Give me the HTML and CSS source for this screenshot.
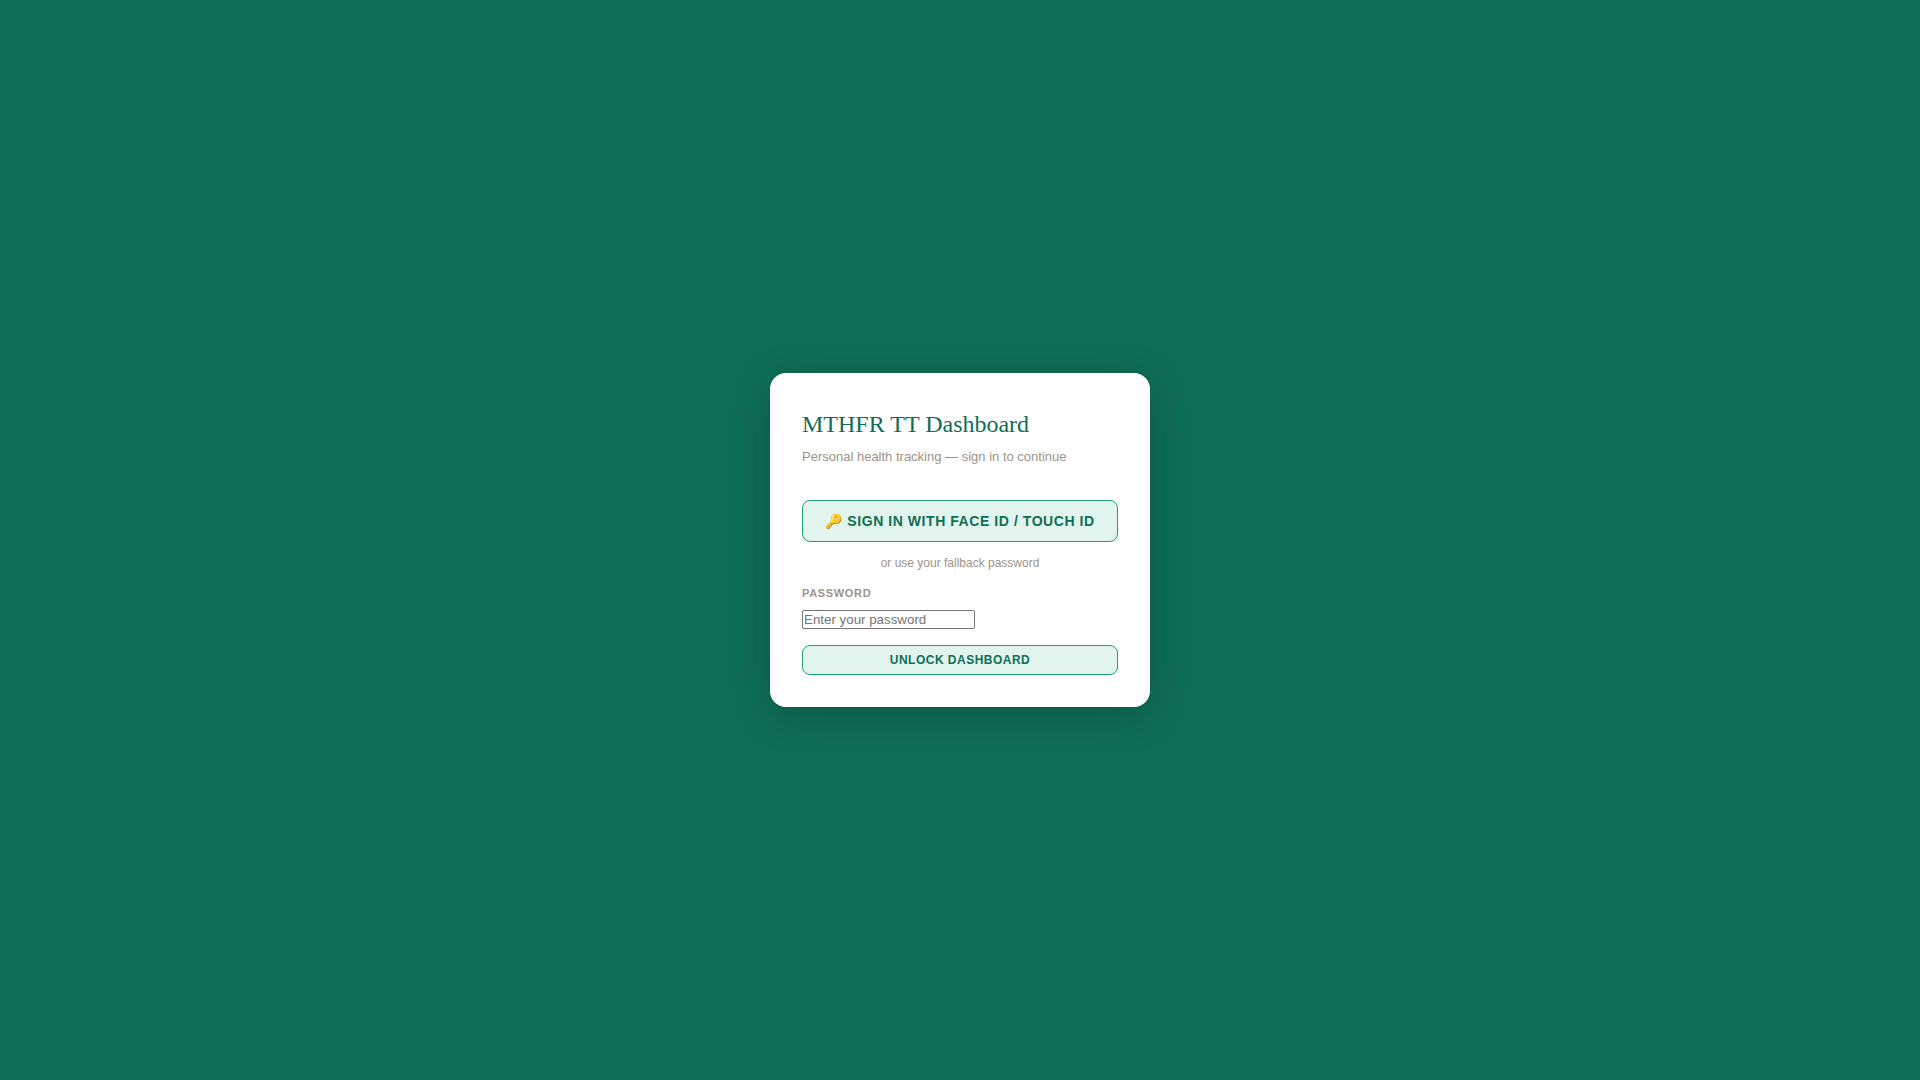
FILE: index.html
```html
<!DOCTYPE html>
<html lang="en">
<head>
<meta charset="utf-8">
<title>MTHFR TT Dashboard</title>
<link rel="stylesheet" href="styles.css">
</head>
<body>
<main class="lock-screen">
  <form class="card">
    <h1 class="title">MTHFR TT Dashboard</h1>
    <p class="subtitle">Personal health tracking — sign in to continue</p>
    <button type="button" class="btn btn-large">🔑 Sign in with Face ID / Touch ID</button>
    <p class="divider">or use your fallback password</p>
    <label class="label" for="password">Password</label>
    <input class="input" id="password" type="password" placeholder="Enter your password">
    <button type="submit" class="btn">Unlock Dashboard</button>
  </form>
</main>
</body>
</html>
```
FILE: styles.css
```css
* { box-sizing: border-box; }

body {
  margin: 0;
  font-family: "Liberation Sans", Arial, sans-serif;
  background: #0f6e56;
}

.lock-screen {
  min-height: 100vh;
  display: flex;
  align-items: center;
  justify-content: center;
}

.card {
  width: 100%;
  max-width: 380px;
  padding: 32px;
  background: #fff;
  border-radius: 16px;
  box-shadow: 0 8px 40px rgba(0, 0, 0, 0.2);
}

.title {
  margin: 0 0 4px;
  font-family: "Liberation Serif", serif;
  font-size: 24px;
  font-weight: 400;
  line-height: 38px;
  color: #0f6e56;
}

.subtitle {
  margin: 0 0 33px;
  font-size: 13px;
  line-height: 20px;
  color: #9c9488;
}

.btn {
  display: block;
  width: 100%;
  padding: 7px 16px;
  border: 1px solid #1d9e75;
  border-radius: 8px;
  background: #e1f5ee;
  color: #0f6e56;
  font: 700 12px "Liberation Sans", Arial, sans-serif;
  letter-spacing: 0.04em;
  text-transform: uppercase;
}

.btn-large {
  padding: 12px;
  font-size: 14px;
}

.divider {
  margin: 12px 0;
  font-size: 12px;
  line-height: 19px;
  text-align: center;
  color: #9c9488;
}

.label {
  display: block;
  margin-bottom: 8px;
  font-size: 11px;
  font-weight: 700;
  line-height: 17px;
  letter-spacing: 0.06em;
  text-transform: uppercase;
  color: #9c9488;
}

.input {
  display: block;
  width: 173px;
  margin-bottom: 16px;
  padding: 0;
}
```
